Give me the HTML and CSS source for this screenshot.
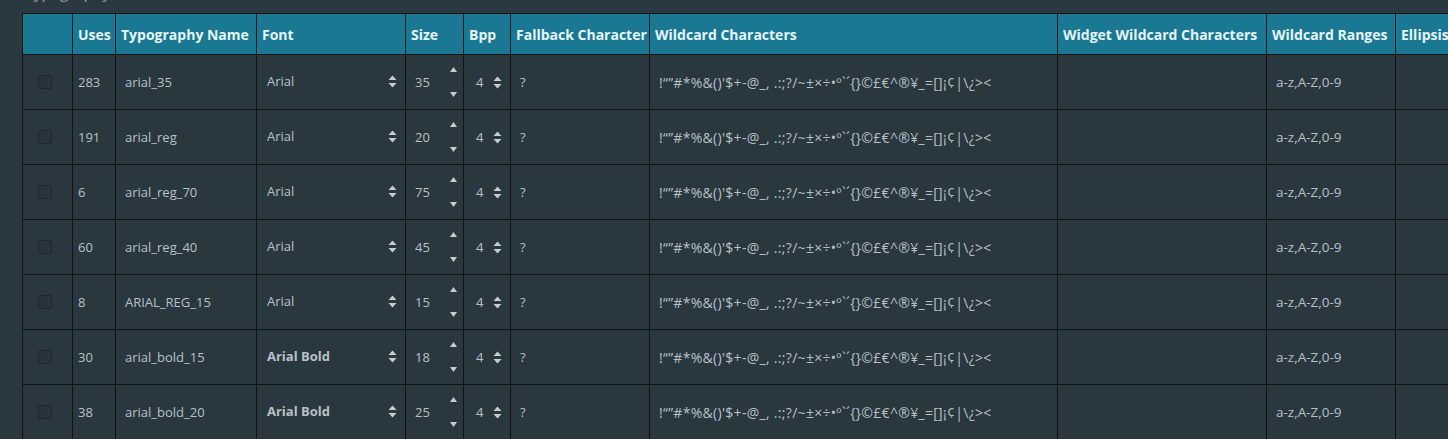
FILE: index.html
```html
<!DOCTYPE html>
<html>
<head>
<meta charset="utf-8">
<link rel="stylesheet" href="styles.css">
</head>
<body>
<div class="page">
  <div class="title">Typography</div>
  <div class="table-wrap">
    <table class="grid">
      <colgroup>
        <col class="c-chk"><col class="c-uses"><col class="c-name"><col class="c-font"><col class="c-size"><col class="c-bpp"><col class="c-fb"><col class="c-wc"><col class="c-wwc"><col class="c-wr"><col class="c-el">
      </colgroup>
      <thead>
        <tr>
          <th></th><th>Uses</th><th>Typography Name</th><th>Font</th><th>Size</th><th>Bpp</th><th>Fallback Character</th><th>Wildcard Characters</th><th>Widget Wildcard Characters</th><th>Wildcard Ranges</th><th>Ellipsis Character</th>
        </tr>
      </thead>
      <tbody id="rows"></tbody>
    </table>
  </div>
</div>
<script src="app.js"></script>
</body>
</html>
```

FILE: app.js
```js
const data = [
  [283, "arial_35", "Arial", false, 35],
  [191, "arial_reg", "Arial", false, 20],
  [6, "arial_reg_70", "Arial", false, 75],
  [60, "arial_reg_40", "Arial", false, 45],
  [8, "ARIAL_REG_15", "Arial", false, 15],
  [30, "arial_bold_15", "Arial Bold", true, 18],
  [38, "arial_bold_20", "Arial Bold", true, 25]
];
const wc = "!\u201C\u201D#*%&()'$+-@_, .:;?/~\u00B1\u00D7\u00F7\u2022\u00BA\u0060\u00B4{}\u00A9\u00A3\u20AC^\u00AE\u00A5_=[]\u00A1\u00A2|\\\u00BF><";
const updown = '<svg class="updown" width="9" height="13" viewBox="0 0 9 13"><path d="M4.5 0.5 L8.5 5 L0.5 5 Z M0.5 8 L8.5 8 L4.5 12.5 Z" fill="currentColor"/></svg>';
const up = '<svg width="7" height="5" viewBox="0 0 7 5"><path d="M3.5 0 L7 5 L0 5 Z" fill="currentColor"/></svg>';
const down = '<svg width="7" height="5" viewBox="0 0 7 5"><path d="M0 0 L7 0 L3.5 5 Z" fill="currentColor"/></svg>';
const tb = document.getElementById("rows");
tb.innerHTML = data.map(r => `
<tr>
  <td class="chk"><span class="box"></span></td>
  <td class="uses">${r[0]}</td>
  <td class="name">${r[1]}</td>
  <td class="font"><div class="sel"><span class="${r[3] ? 'bold' : ''}">${r[2]}</span>${updown}</div></td>
  <td class="size"><div class="num"><span>${r[4]}</span><span class="spin">${up}${down}</span></div></td>
  <td class="bpp"><div class="sel2"><span>4</span>${updown}</div></td>
  <td class="fb">?</td>
  <td class="wc">${wc.replace(/&/g,'&amp;').replace(/</g,'&lt;').replace(/>/g,'&gt;')}</td>
  <td class="wwc"></td>
  <td class="wr">a-z,A-Z,0-9</td>
  <td class="el"></td>
</tr>`).join("");
```

FILE: styles.css
```css
html, body {
  margin: 0;
  padding: 0;
  background: #2a3840;
  overflow: hidden;
}
.page {
  width: 1448px;
  height: 439px;
  overflow: hidden;
  font-family: "Open Sans", "Noto Sans", sans-serif;
}
.title {
  margin: -17px 0 0 25px;
  height: 30px;
  font-size: 15px;
  line-height: 20px;
  color: #7f8c92;
  font-weight: 600;
}
.table-wrap {
  margin-left: 22px;
  width: 1700px;
}
.grid {
  border-collapse: collapse;
  table-layout: fixed;
  width: 1548px;
}
.c-chk { width: 50px; }
.c-uses { width: 43px; }
.c-name { width: 141px; }
.c-font { width: 149px; }
.c-size { width: 58px; }
.c-bpp { width: 47px; }
.c-fb { width: 139px; }
.c-wc { width: 408px; }
.c-wwc { width: 209px; }
.c-wr { width: 129px; }
.c-el { width: 175px; }

.grid th {
  background: #1a7892;
  color: #e4f5fa;
  font-weight: 700;
  font-size: 14px;
  text-align: left;
  height: 40px;
  padding: 0 0 0 5px;
  border: 1px solid #10181c;
  white-space: nowrap;
  overflow: hidden;
}
.grid td {
  height: 54px;
  padding: 0 0 0 5px;
  border: 1px solid #0e1417;
  background: #29373f;
  color: #b6c2c7;
  font-size: 13px;
  white-space: nowrap;
  overflow: hidden;
  vertical-align: middle;
}
.grid td.chk { padding: 0 0 0 15px; }
.box {
  display: block;
  width: 12px;
  height: 12px;
  border: 1px solid #1d282e;
  border-radius: 2px;
  background: #27343b;
}
.grid td.name { padding-left: 9px; }
.grid td.font { padding: 0 8px 0 10px; }
.sel {
  display: flex;
  align-items: center;
  justify-content: space-between;
  padding-bottom: 2px;
}
.bold { font-weight: 700; }
.updown { color: #c4ced2; display: block; }
.grid td.size { padding: 0 6px 0 9px; }
.num {
  display: flex;
  align-items: center;
  justify-content: space-between;
  height: 54px;
}
.spin {
  display: flex;
  flex-direction: column;
  justify-content: space-between;
  height: 30px;
  color: #c4ced2;
}
.spin svg { display: block; }
.grid td.bpp { padding: 0 0 0 12px; }
.sel2 {
  display: flex;
  align-items: center;
  gap: 10px;
}
.grid td.fb { padding-left: 9px; }
.grid td.wc { padding-left: 9px; font-size: 14px; letter-spacing: 0.3px; }
.grid td.wr { padding-left: 9px; font-size: 13.5px; }
```
